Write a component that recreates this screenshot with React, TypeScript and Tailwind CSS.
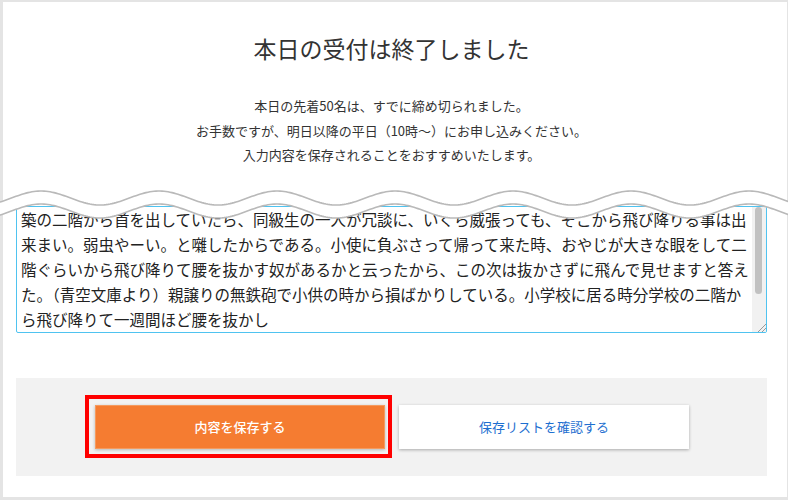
const lines = [
  '築の二階から首を出していたら、同級生の一人が冗談に、いくら威張っても、そこから飛び降りる事は出',
  '来まい。弱虫やーい。と囃したからである。小使に負ぶさって帰って来た時、おやじが大きな眼をして二',
  '階ぐらいから飛び降りて腰を抜かす奴があるかと云ったから、この次は抜かさずに飛んで見せますと答え',
  'た。（青空文庫より）親譲りの無鉄砲で小供の時から損ばかりしている。小学校に居る時分学校の二階か',
  'ら飛び降りて一週間ほど腰を抜かし',
]

// torn-paper wave between the notice and the textarea
const TOP = 180
const PERIOD = 118
const AMP = 7

function wavePoints(center: number) {
  const pts: string[] = []
  for (let x = -2; x <= 790; x += 2) {
    const y = center + AMP * Math.cos((2 * Math.PI * (x - 100)) / PERIOD) - TOP
    pts.push(`${x},${y.toFixed(2)}`)
  }
  return pts
}

function Tear() {
  const upper = wavePoints(198)
  const lower = wavePoints(211)
  const band = [...upper, ...lower.slice().reverse()].join(' ')
  return (
    <svg
      className="absolute left-0 top-[180px] pointer-events-none"
      width={788}
      height={44}
      viewBox="0 0 788 44"
    >
      <polygon points={band} fill="#ffffff" />
      <polyline points={upper.join(' ')} fill="none" stroke="#b9b9b9" strokeWidth={1.6} />
      <polyline points={lower.join(' ')} fill="none" stroke="#b9b9b9" strokeWidth={1.6} />
    </svg>
  )
}

export default function App() {
  return (
    <div
      className="relative w-[788px] h-[500px] bg-[#e4e4e4] pt-[2px] pl-[3px] pr-px pb-[3px] overflow-hidden"
      style={{ fontFamily: '"Noto Sans CJK JP", "Noto Sans", sans-serif' }}
    >
      <div className="h-full bg-white flex flex-col pl-[13px] pr-[20px]">
        {/* Notice */}
        <h1 className="pt-[29px] text-center text-[23px] leading-[34px] text-[#333] font-normal">
          本日の受付は終了しました
        </h1>
        <div className="mt-[29px] text-center text-[13px] leading-[24.5px] text-[#333]">
          <p>本日の先着50名は、すでに締め切られました。</p>
          <p>お手数ですが、明日以降の平日（10時〜）にお申し込みください。</p>
          <p>入力内容を保存されることをおすすめいたします。</p>
        </div>

        {/* Textarea */}
        <div className="mt-[38px] h-[127px] flex border border-[#4fc3f0] rounded-[2px] bg-white">
          <div className="flex-1 pl-[4px] text-[15.5px] leading-[25px] text-[#222]">
            {lines.map((l, i) => (
              <div key={i} className="whitespace-nowrap">
                {l}
              </div>
            ))}
          </div>
          <div className="w-[14px] flex flex-col">
            <div className="flex-1 bg-[#f1f1f1]">
              <div className="ml-[3px] w-[7px] h-[87px] rounded-[4px] bg-[#c1c1c1]" />
            </div>
            <div className="h-[14px] bg-[#f1f1f1] flex items-end justify-end">
              <svg width="10" height="10" viewBox="0 0 10 10">
                <line x1="2" y1="10" x2="10" y2="2" stroke="#9a9a9a" strokeWidth="1" />
                <line x1="6" y1="10" x2="10" y2="6" stroke="#9a9a9a" strokeWidth="1" />
              </svg>
            </div>
          </div>
        </div>

        {/* Actions */}
        <div className="mt-[45px] h-[98px] bg-[#f2f2f2] flex items-center justify-center gap-[14px] pl-px">
          <div className="relative">
            <button className="w-[290px] h-[44px] bg-[#f57c31] border border-[#f59a5e] shadow-[0_1px_3px_rgba(0,0,0,0.25)] text-white text-[13px] font-medium">
              内容を保存する
            </button>
            <div className="absolute -left-[10px] -top-[10px] -bottom-[9px] -right-[7px] border-4 border-[#ff0000] pointer-events-none" />
          </div>
          <button className="w-[290px] h-[44px] bg-white shadow-[0_1px_3px_rgba(0,0,0,0.3)] text-[#1e6fd0] text-[13px]">
            保存リストを確認する
          </button>
        </div>
      </div>
      <Tear />
    </div>
  )
}
